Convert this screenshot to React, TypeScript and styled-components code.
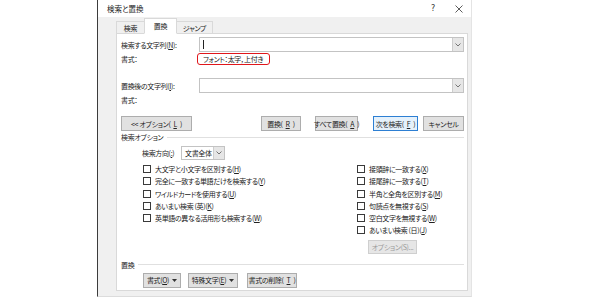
import React from "react";
import styled, { createGlobalStyle } from "styled-components";

const Global = createGlobalStyle`
  html, body { margin: 0; padding: 0; background: #fff; }
  body {
    font-family: "Noto Sans CJK JP", "Noto Sans", sans-serif;
    font-size: 7px;
    letter-spacing: -0.35px;
    font-feature-settings: "palt";
    color: #222;
  }
`;

const Page = styled.div`
  width: 600px;
  height: 300px;
  box-sizing: border-box;
  padding-left: 97px;
  display: flex;
  overflow: hidden;
`;

const Dialog = styled.div`
  width: 375px;
  height: 297px;
  box-sizing: border-box;
  background: #f0f0f0;
  border-left: 1px solid #3c3c3c;
  border-right: 1px solid #e4e4e4;
  border-bottom: 1px solid #dcdcdc;
  display: flex;
  flex-direction: column;
`;

const TitleBar = styled.div`
  height: 17px;
  background: #fff;
  display: flex;
  align-items: center;
  padding: 0 5px 0 9px;
  font-size: 7.5px;
  letter-spacing: 0;
`;

const Title = styled.span`
  flex: 1;
`;

const TitleIcon = styled.span<{ $mr?: number }>`
  width: 14px;
  height: 12px;
  margin-right: ${(p) => p.$mr ?? 0}px;
  display: flex;
  align-items: center;
  justify-content: center;
  font-family: "DejaVu Sans", sans-serif;
  font-size: 8px;
  color: #333;
`;

const TabRow = styled.div`
  display: flex;
  align-items: flex-end;
  height: 17px;
  padding-left: 18px;
  margin-bottom: -1px;
  position: relative;
  z-index: 1;
`;

const Tab = styled.div<{ $active?: boolean; $w: number }>`
  width: ${(p) => p.$w}px;
  height: ${(p) => (p.$active ? 16 : 13)}px;
  display: flex;
  align-items: center;
  justify-content: center;
  box-sizing: border-box;
  background: ${(p) => (p.$active ? "#fff" : "#f0f0f0")};
  border: 1px solid #d9d9d9;
  border-bottom: ${(p) => (p.$active ? "1px solid #fff" : "1px solid #d9d9d9")};
  margin-left: ${(p) => (p.$active ? -1 : 0)}px;
  margin-right: ${(p) => (p.$active ? -1 : 0)}px;
  z-index: ${(p) => (p.$active ? 2 : 1)};
`;

const Panel = styled.div`
  flex: 1;
  margin: 0 3px 5px 18px;
  background: #fff;
  border: 1px solid #d9d9d9;
  padding: 3px 3px 0 4px;
  display: flex;
  flex-direction: column;
`;

const Row = styled.div<{ $h: number; $mt?: number; $pl?: number }>`
  display: flex;
  align-items: center;
  height: ${(p) => p.$h}px;
  margin-top: ${(p) => p.$mt ?? 0}px;
  padding-left: ${(p) => p.$pl ?? 0}px;
  white-space: nowrap;
`;

const Label = styled.span<{ $w?: number }>`
  width: ${(p) => (p.$w ? `${p.$w}px` : "auto")};
  flex-shrink: 0;
`;

const Combo = styled.div<{ $w?: number }>`
  ${(p) => (p.$w ? `width: ${p.$w}px;` : "flex: 1;")}
  height: 100%;
  box-sizing: border-box;
  border: 1px solid #c3c3c3;
  background: #fff;
  display: flex;
  align-items: stretch;
`;

const ComboText = styled.div`
  flex: 1;
  display: flex;
  align-items: center;
  padding-left: 3px;
`;

const Caret = styled.span`
  width: 1px;
  height: 9px;
  background: #222;
`;

const DropBtn = styled.div`
  width: 10px;
  background: #e6e6e6;
  border-left: 1px solid #cdcdcd;
  display: flex;
  align-items: center;
  justify-content: center;
`;

const FormatBadge = styled.span`
  height: 12px;
  box-sizing: border-box;
  border: 1.6px solid #e0161b;
  border-radius: 3px;
  padding: 0 6px 0 5px;
  display: flex;
  align-items: center;
`;

const Button = styled.div<{ $w: number; $ml?: number; $focus?: boolean; $disabled?: boolean }>`
  width: ${(p) => p.$w}px;
  height: 100%;
  margin-left: ${(p) => p.$ml ?? 0}px;
  box-sizing: border-box;
  border: 1px solid ${(p) => (p.$focus ? "#2d7fd3" : p.$disabled ? "#cfcfcf" : "#adadad")};
  background: ${(p) => (p.$focus ? "#e5f1fb" : p.$disabled ? "#e6e6e6" : "#e1e1e1")};
  color: ${(p) => (p.$disabled ? "#9a9a9a" : "#222")};
  display: flex;
  align-items: center;
  justify-content: center;
  gap: 3px;
  flex-shrink: 0;
  white-space: nowrap;
`;

const Spacer = styled.div`
  flex: 1;
`;

const GroupHeader = styled.div<{ $mt?: number }>`
  display: flex;
  align-items: center;
  height: 12px;
  margin-top: ${(p) => p.$mt ?? 0}px;
  gap: 4px;
  &::after {
    content: "";
    flex: 1;
    height: 1px;
    background: #e0e0e0;
  }
`;

const OptionsGrid = styled.div`
  display: grid;
  grid-template-columns: 214px 1fr;
  padding-left: 22px;
  margin-top: 3px;
`;

const Column = styled.div`
  display: flex;
  flex-direction: column;
`;

const CheckRow = styled.label`
  display: flex;
  align-items: center;
  height: 12.25px;
  gap: 4px;
  white-space: nowrap;
`;

const Box = styled.span`
  width: 8px;
  height: 8px;
  box-sizing: border-box;
  border: 1px solid #3a3a3a;
  background: #fff;
  flex-shrink: 0;
`;

const DisabledRow = styled.div`
  display: flex;
  height: 14px;
  margin-top: 3px;
  padding-left: 11px;
`;

const Chevron = () => (
  <svg width="6" height="4" viewBox="0 0 6 4">
    <path d="M0.5 0.5 L3 3 L5.5 0.5" fill="none" stroke="#666" strokeWidth="0.9" />
  </svg>
);

const DownTri = () => (
  <svg width="5" height="3" viewBox="0 0 5 3">
    <path d="M0 0 L5 0 L2.5 3 Z" fill="#333" />
  </svg>
);

const CloseIcon = () => (
  <svg width="8" height="8" viewBox="0 0 8 8">
    <path d="M0.5 0.5 L7.5 7.5 M7.5 0.5 L0.5 7.5" stroke="#333" strokeWidth="0.8" />
  </svg>
);

const leftOpts: [string, string][] = [
  ["大文字と小文字を区別する", "H"],
  ["完全に一致する単語だけを検索する", "Y"],
  ["ワイルドカードを使用する", "U"],
  ["あいまい検索 (英)", "K"],
  ["英単語の異なる活用形も検索する", "W"],
];

const rightOpts: [string, string][] = [
  ["接頭辞に一致する", "X"],
  ["接尾辞に一致する", "T"],
  ["半角と全角を区別する", "M"],
  ["句読点を無視する", "S"],
  ["空白文字を無視する", "W"],
  ["あいまい検索 (日)", "J"],
];

const Check = ({ text, k }: { text: string; k: string }) => (
  <CheckRow>
    <Box />
    <span>
      {text}(<u>{k}</u>)
    </span>
  </CheckRow>
);

export default function App() {
  return (
    <>
      <Global />
      <Page>
        <Dialog>
          <TitleBar>
            <Title>検索と置換</Title>
            <TitleIcon $mr={12}>?</TitleIcon>
            <TitleIcon>
              <CloseIcon />
            </TitleIcon>
          </TitleBar>
          <TabRow>
            <Tab $w={29}>検索</Tab>
            <Tab $w={33} $active>
              置換
            </Tab>
            <Tab $w={37}>ジャンプ</Tab>
          </TabRow>
          <Panel>
            <Row $h={15}>
              <Label $w={78}>
                検索する文字列(<u>N</u>):
              </Label>
              <Combo>
                <ComboText>
                  <Caret />
                </ComboText>
                <DropBtn>
                  <Chevron />
                </DropBtn>
              </Combo>
            </Row>
            <Row $h={13}>
              <Label $w={76}>書式：</Label>
              <FormatBadge>フォント：太字，上付き</FormatBadge>
            </Row>
            <Row $h={15} $mt={13}>
              <Label $w={78}>
                置換後の文字列(<u>I</u>):
              </Label>
              <Combo>
                <ComboText />
                <DropBtn>
                  <Chevron />
                </DropBtn>
              </Combo>
            </Row>
            <Row $h={14}>
              <Label>書式：</Label>
            </Row>
            <Row $h={15} $mt={9}>
              <Button $w={71}>
                &lt;&lt; オプション(<u>L</u>)
              </Button>
              <Spacer />
              <Button $w={40}>
                置換(<u>R</u>)
              </Button>
              <Button $w={43} $ml={14}>
                すべて置換(<u>A</u>)
              </Button>
              <Button $w={45} $focus $ml={15}>
                次を検索(<u>F</u>)
              </Button>
              <Button $w={41} $ml={5}>
                キャンセル
              </Button>
            </Row>
            <GroupHeader $mt={0}>検索オプション</GroupHeader>
            <Row $h={14} $mt={3} $pl={21}>
              <Label $w={39}>
                検索方向(<u>:</u>)
              </Label>
              <Combo $w={44}>
                <ComboText>文書全体</ComboText>
                <DropBtn>
                  <Chevron />
                </DropBtn>
              </Combo>
            </Row>
            <OptionsGrid>
              <Column>
                {leftOpts.map(([t, k]) => (
                  <Check key={t} text={t} k={k} />
                ))}
              </Column>
              <Column>
                {rightOpts.map(([t, k]) => (
                  <Check key={t} text={t} k={k} />
                ))}
                <DisabledRow>
                  <Button $w={49} $disabled>
                    オプション(S)...
                  </Button>
                </DisabledRow>
              </Column>
            </OptionsGrid>
            <GroupHeader $mt={5}>置換</GroupHeader>
            <Row $h={15} $mt={2} $pl={22}>
              <Button $w={38}>
                <span>
                  書式(<u>O</u>)
                </span>
                <DownTri />
              </Button>
              <Button $w={50} $ml={7}>
                <span>
                  特殊文字(<u>E</u>)
                </span>
                <DownTri />
              </Button>
              <Button $w={50} $ml={9}>
                書式の削除(<u>T</u>)
              </Button>
            </Row>
          </Panel>
        </Dialog>
      </Page>
    </>
  );
}
